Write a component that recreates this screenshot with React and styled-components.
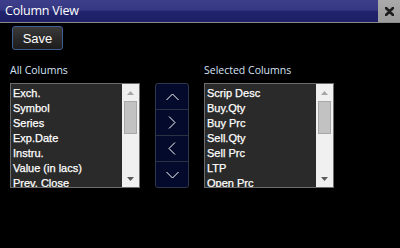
import styled, { createGlobalStyle } from 'styled-components';

const allColumns = ['Exch.', 'Symbol', 'Series', 'Exp.Date', 'Instru.', 'Value (in lacs)', 'Prev. Close'];
const selectedColumns = ['Scrip Desc', 'Buy.Qty', 'Buy Prc', 'Sell.Qty', 'Sell Prc', 'LTP', 'Open Prc'];

const GlobalStyle = createGlobalStyle`
  html, body {
    margin: 0;
    padding: 0;
    background: #000;
  }
`;

const ListBox = ({ items }) => (
  <Box>
    <Items>
      {items.map(item => (
        <Item key={item}>{item}</Item>
      ))}
    </Items>
    <ScrollBar>
      <ScrollArrow>
        <svg width="7" height="4" viewBox="0 0 7 4">
          <polygon points="0,4 7,4 3.5,0" fill="#a6a6a6" />
        </svg>
      </ScrollArrow>
      <Track>
        <Thumb />
      </Track>
      <ScrollArrow>
        <svg width="7" height="4" viewBox="0 0 7 4">
          <polygon points="0,0 7,0 3.5,4" fill="#5a5a5a" />
        </svg>
      </ScrollArrow>
    </ScrollBar>
  </Box>
);

const Chevron = ({ dir }) => {
  const points = {
    up: '0.5,7 6.5,1 12.5,7',
    down: '0.5,1 6.5,7 12.5,1',
    right: '1,0.5 7,6.5 1,12.5',
    left: '7,0.5 1,6.5 7,12.5',
  }[dir];
  const vertical = dir === 'up' || dir === 'down';
  return (
    <svg width={vertical ? 13 : 8} height={vertical ? 8 : 13} viewBox={vertical ? '0 0 13 8' : '0 0 8 13'}>
      <polyline points={points} fill="none" stroke="#fff" strokeWidth="1" />
    </svg>
  );
};

const App = () => {
  return (
    <Window>
      <GlobalStyle />
      <TitleBar>
        <Title>Column View</Title>
        <CloseButton>
          <svg width="9" height="9" viewBox="0 0 9 9">
            <path d="M1 1 L8 8 M8 1 L1 8" stroke="#1e1e1e" strokeWidth="2.6" strokeLinecap="round" />
          </svg>
        </CloseButton>
      </TitleBar>
      <Body>
        <SaveButton>Save</SaveButton>
        <Columns>
          <Label>All Columns</Label>
          <span />
          <Label>Selected Columns</Label>
          <ListBox items={allColumns} />
          <ArrowPanel>
            <ArrowButton><Chevron dir="up" /></ArrowButton>
            <ArrowButton><Chevron dir="right" /></ArrowButton>
            <ArrowButton><Chevron dir="left" /></ArrowButton>
            <ArrowButton><Chevron dir="down" /></ArrowButton>
          </ArrowPanel>
          <ListBox items={selectedColumns} />
        </Columns>
      </Body>
    </Window>
  );
};

const Window = styled.div`
  width: 400px;
  height: 248px;
  overflow: hidden;
  background: #000;
  font-family: 'Liberation Sans', Arial, sans-serif;
`;

const TitleBar = styled.div`
  display: flex;
  height: 22px;
  border-bottom: 1px solid #8a8a8a;
  background: linear-gradient(#3d3f8c 0%, #363883 45%, #21246c 52%, #1d2067 100%);
`;

const Title = styled.div`
  flex: 1;
  padding-left: 5px;
  line-height: 22px;
  color: #fff;
  font-family: 'Open Sans', sans-serif;
  font-size: 12.5px;
  letter-spacing: -0.2px;
`;

const CloseButton = styled.div`
  width: 22px;
  display: flex;
  align-items: center;
  justify-content: center;
  background: linear-gradient(#aaaaaa, #9c9c9c);
`;

const Body = styled.div`
  padding: 3px 0 0 10px;
`;

const SaveButton = styled.button`
  display: block;
  margin-left: 2px;
  width: 51px;
  height: 24px;
  padding: 0;
  border: 1px solid #3f5d92;
  border-radius: 3px;
  background: linear-gradient(#3a3a3a, #2a2a2a 50%, #1c1c1c);
  color: #fff;
  font-family: 'Liberation Sans', Arial, sans-serif;
  font-size: 13px;
`;

const Columns = styled.div`
  display: grid;
  grid-template-columns: 130px 34px 130px;
  column-gap: 15px;
  row-gap: 5px;
  margin-top: 12px;
`;

const Label = styled.div`
  line-height: 16px;
  color: #d6e2f6;
  font-family: 'Open Sans', sans-serif;
  font-size: 10.5px;
`;

const Box = styled.div`
  display: flex;
  height: 103px;
  border: 1px solid #6c6c6c;
  background: #2a2a2a;
`;

const Items = styled.div`
  flex: 1;
  overflow: hidden;
  padding: 2px 2px 0;
`;

const Item = styled.div`
  line-height: 15px;
  color: #fff;
  font-size: 11px;
  white-space: nowrap;
  -webkit-text-stroke: 0.25px #fff;
`;

const ScrollBar = styled.div`
  width: 17px;
  display: flex;
  flex-direction: column;
  background: #f0f0f0;
`;

const ScrollArrow = styled.div`
  height: 17px;
  display: flex;
  align-items: center;
  justify-content: center;
`;

const Track = styled.div`
  flex: 1;
  padding: 0 2px;
`;

const Thumb = styled.div`
  height: 31px;
  border: 1px solid #a8a8a8;
  background: #c2c2c2;
`;

const ArrowPanel = styled.div`
  display: flex;
  flex-direction: column;
  height: 103px;
  border: 1px solid #30364a;
  border-radius: 3px;
  background: #030a2b;
`;

const ArrowButton = styled.div`
  flex: 1;
  display: flex;
  align-items: center;
  justify-content: center;

  & + & {
    border-top: 1px solid #2c3244;
  }
`;

export default App;
